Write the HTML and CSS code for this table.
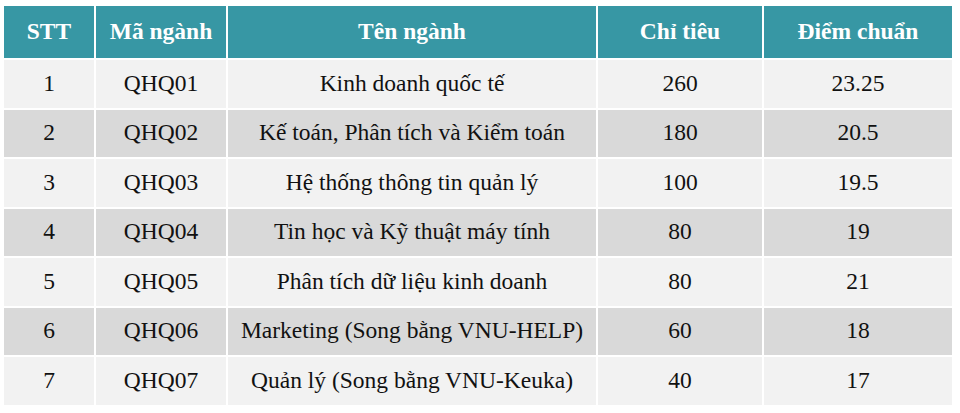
FILE: index.html
```html
<!DOCTYPE html>
<html lang="vi">
<head>
<meta charset="utf-8">
<link rel="stylesheet" href="styles.css">
</head>
<body>
<table class="grid">
  <colgroup>
    <col class="c1"><col class="c2"><col class="c3"><col class="c4"><col class="c5">
  </colgroup>
  <thead>
    <tr class="head">
      <th>STT</th><th>Mã ngành</th><th>Tên ngành</th><th>Chỉ tiêu</th><th>Điểm chuẩn</th>
    </tr>
  </thead>
  <tbody>
    <tr class="odd"><td>1</td><td>QHQ01</td><td>Kinh doanh quốc tế</td><td>260</td><td>23.25</td></tr>
    <tr class="even"><td>2</td><td>QHQ02</td><td>Kế toán, Phân tích và Kiểm toán</td><td>180</td><td>20.5</td></tr>
    <tr class="odd"><td>3</td><td>QHQ03</td><td>Hệ thống thông tin quản lý</td><td>100</td><td>19.5</td></tr>
    <tr class="even"><td>4</td><td>QHQ04</td><td>Tin học và Kỹ thuật máy tính</td><td>80</td><td>19</td></tr>
    <tr class="odd"><td>5</td><td>QHQ05</td><td>Phân tích dữ liệu kinh doanh</td><td>80</td><td>21</td></tr>
    <tr class="even"><td>6</td><td>QHQ06</td><td>Marketing (Song bằng VNU-HELP)</td><td>60</td><td>18</td></tr>
    <tr class="odd"><td>7</td><td>QHQ07</td><td>Quản lý (Song bằng VNU-Keuka)</td><td>40</td><td>17</td></tr>
  </tbody>
</table>
</body>
</html>
```
FILE: styles.css
```css
html, body {
  margin: 0;
  padding: 0;
  background: #ffffff;
}
body {
  padding: 4px 0 0 2px;
}
.grid {
  border-collapse: separate;
  border-spacing: 2px;
  table-layout: fixed;
  width: 952px;
  font-family: "Liberation Serif", "DejaVu Serif", serif;
}
.c1 { width: 90px; }
.c2 { width: 130px; }
.c3 { width: 368px; }
.c4 { width: 164px; }
.c5 { width: 188px; }
.grid th, .grid td {
  padding: 0;
  text-align: center;
  vertical-align: middle;
  white-space: nowrap;
  font-family: "Liberation Serif", "DejaVu Serif", serif;
  line-height: 1.1;
}
.head th {
  height: 52px;
  background: #3797a4;
  color: #ffffff;
  font-weight: bold;
  font-size: 23.5px;
}
.grid td {
  height: 47.5px;
  font-size: 23.5px;
  color: #111111;
}
.odd td { background: #f2f2f2; }
.even td { background: #d9d9d9; }
```
